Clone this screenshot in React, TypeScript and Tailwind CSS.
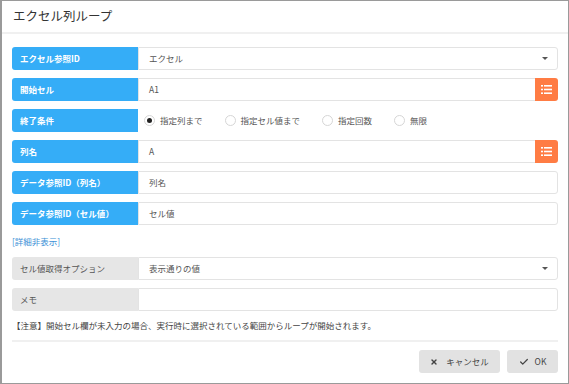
import React from 'react';
import { Check, X } from 'lucide-react';

const font = { fontFamily: '"Noto Sans CJK JP", "Noto Sans", sans-serif' };

const ListIcon = () => (
  <svg width="11" height="9" viewBox="0 0 11 9" fill="white">
    <rect x="0" y="0" width="2" height="1.6" />
    <rect x="3" y="0" width="8" height="1.6" />
    <rect x="0" y="3.7" width="2" height="1.6" />
    <rect x="3" y="3.7" width="8" height="1.6" />
    <rect x="0" y="7.4" width="2" height="1.6" />
    <rect x="3" y="7.4" width="8" height="1.6" />
  </svg>
);

const Label = ({ text, gray }: { text: string; gray?: boolean }) => (
  <div
    className={`w-[126px] shrink-0 h-full flex items-center pl-[8px] rounded-l-[3px] text-[8.5px] ${
      gray ? 'bg-[#e6e6e6] text-[#555]' : 'bg-[#35adf7] text-white font-bold'
    }`}
  >
    {text}
  </div>
);

const Row = ({ label, gray, children }: { label: string; gray?: boolean; children?: React.ReactNode }) => (
  <div className="flex h-[23px]">
    <Label text={label} gray={gray} />
    {children}
  </div>
);

const Input = ({ value, caret, picker }: { value?: string; caret?: boolean; picker?: boolean }) => (
  <div className="flex flex-1">
    <div
      className={`flex-1 flex items-center justify-between pl-[10px] pr-[9px] border border-[#e3e3e3] text-[8.5px] text-[#555] ${
        picker ? 'border-r-0' : 'rounded-r-[3px]'
      }`}
    >
      <span>{value}</span>
      {caret && <span className="w-0 h-0 border-l-[3px] border-r-[3px] border-t-[3px] border-l-transparent border-r-transparent border-t-[#555]" />}
    </div>
    {picker && (
      <div className="w-[23px] bg-[#ff7c44] rounded-r-[3px] flex items-center justify-center">
        <ListIcon />
      </div>
    )}
  </div>
);

const Radio = ({ text, checked }: { text: string; checked?: boolean }) => (
  <div className="flex items-center gap-[5px]">
    <span className="w-[11px] h-[11px] rounded-full border border-[#d6d6d6] flex items-center justify-center bg-white">
      {checked && <span className="w-[5px] h-[5px] rounded-full bg-[#222]" />}
    </span>
    <span>{text}</span>
  </div>
);

export default function App() {
  return (
    <div className="w-[569px] h-[384px] bg-white border border-l-2 border-[#9a9a9a] flex flex-col" style={font}>
      {/* header */}
      <div className="h-[33px] shrink-0 flex items-center pl-[11px] text-[12.5px] text-[#333] border-b-2 border-[#f0f0f0]">
        エクセル列ループ
      </div>

      <div className="flex flex-col gap-[8px] pt-[13px] pl-[10px] pr-[10px]">
        <Row label="エクセル参照ID">
          <Input value="エクセル" caret />
        </Row>
        <Row label="開始セル">
          <Input value="A1" picker />
        </Row>
        <Row label="終了条件">
          <div className="flex items-center gap-[22px] pl-[6px] text-[8.5px] text-[#555]">
            <Radio text="指定列まで" checked />
            <Radio text="指定セル値まで" />
            <Radio text="指定回数" />
            <Radio text="無限" />
          </div>
        </Row>
        <Row label="列名">
          <Input value="A" picker />
        </Row>
        <Row label="データ参照ID（列名）">
          <Input value="列名" />
        </Row>
        <Row label="データ参照ID（セル値）">
          <Input value="セル値" />
        </Row>
        <div className="h-[16px] flex items-center text-[8.5px] text-[#3a8fd6]">[詳細非表示]</div>
        <Row label="セル値取得オプション" gray>
          <Input value="表示通りの値" caret />
        </Row>
        <Row label="メモ" gray>
          <Input />
        </Row>
        <div className="h-[12px] flex items-center text-[8.5px] text-[#444]">
          【注意】開始セル欄が未入力の場合、実行時に選択されている範囲からループが開始されます。
        </div>
        <div className="h-[2px] bg-[#f0f0f0] mt-[1px]" />
        <div className="flex justify-end gap-[7px]">
          <button className="w-[81px] h-[23px] rounded-[3px] bg-[#e2e2e2] text-[8.5px] text-[#444] flex items-center justify-center gap-[8px]">
            <X size={8} strokeWidth={4} />
            キャンセル
          </button>
          <button className="w-[51px] h-[23px] rounded-[3px] bg-[#e2e2e2] text-[8.5px] text-[#444] flex items-center justify-center gap-[6px]">
            <Check size={10} strokeWidth={3} />
            OK
          </button>
        </div>
      </div>
    </div>
  );
}
